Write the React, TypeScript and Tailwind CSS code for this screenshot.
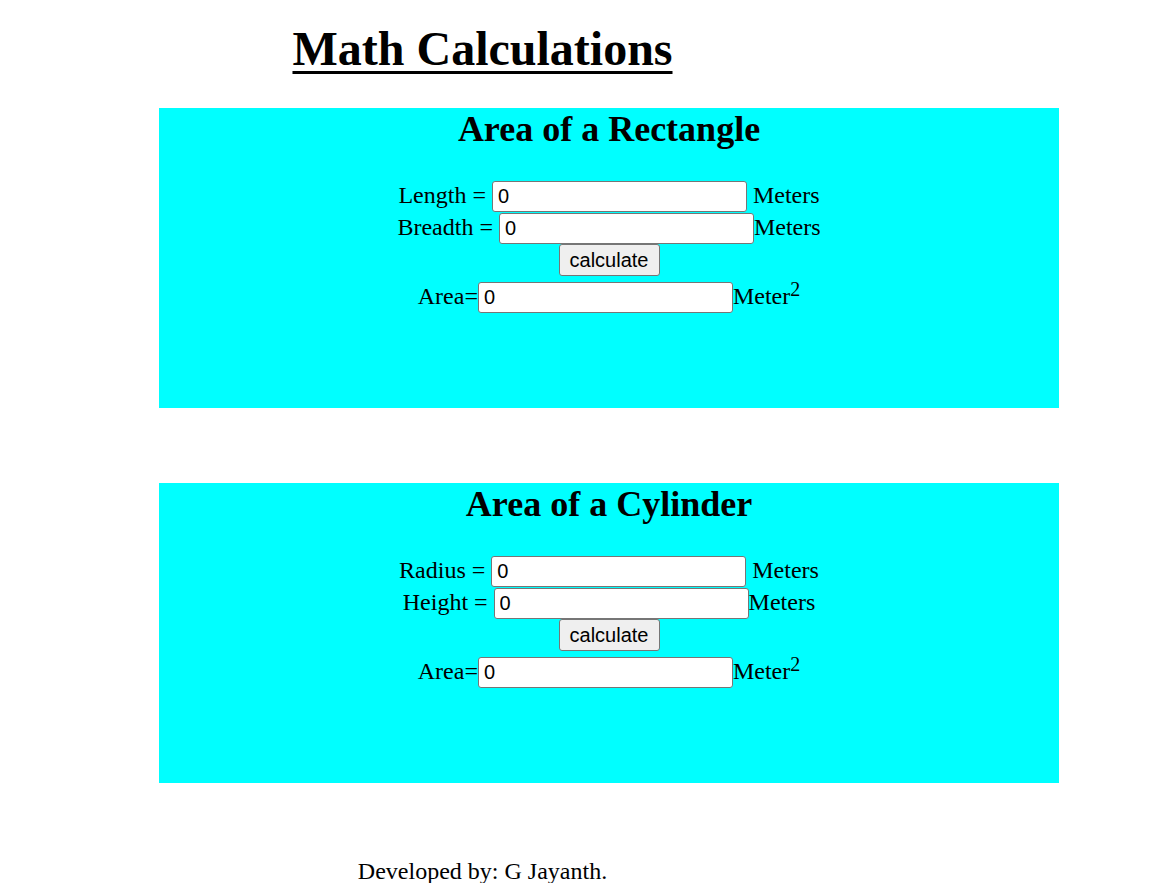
const serif = "font-['Liberation_Serif','Times_New_Roman',serif]";
const sans = "font-['Liberation_Sans',Arial,sans-serif]";

function NumberInput({ className = '' }: { className?: string }) {
  return (
    <input
      type="text"
      defaultValue="0"
      className={`h-[31px] w-[255px] rounded-[3px] border border-[#767676] bg-white pl-[5px] text-[20px] text-black outline-none ${sans} ${className}`}
    />
  );
}

function CalcButton() {
  return (
    <button
      className={`h-[32px] w-[101px] rounded-[3px] border border-[#767676] bg-[#efefef] text-[20px] leading-none text-black ${sans}`}
    >
      calculate
    </button>
  );
}

interface Field {
  label: string;
  gapAfter: boolean;
}

interface CardProps {
  title: string;
  fields: Field[];
}

function Card({ title, fields }: CardProps) {
  return (
    <div className="ml-[159px] h-[300px] w-[900px] bg-[#00ffff] text-center">
      <h2 className="pt-[1px] text-[36px] font-bold leading-[40px]">{title}</h2>
      <div className="mt-[31px] flex flex-col items-center text-[24px]">
        {fields.map((f) => (
          <div key={f.label} className="flex h-[32px] items-center">
            <span className="-translate-y-[1px]">{f.label} =</span>
            <NumberInput className="ml-[6px]" />
            <span className={`-translate-y-[1px] ${f.gapAfter ? 'ml-[6px]' : ''}`}>Meters</span>
          </div>
        ))}
        <div className="flex h-[32px] items-center">
          <CalcButton />
        </div>
        <div className="mt-[5px] flex h-[32px] items-center">
          <span className="-translate-y-[1px]">Area=</span>
          <NumberInput />
          <span className="-translate-y-[1px]">
            Meter
            <span className="relative -top-[8px] text-[20px] leading-none">2</span>
          </span>
        </div>
      </div>
    </div>
  );
}

export default function App() {
  return (
    <div className={`min-h-screen bg-white text-black ${serif}`}>
      <div className="w-[965px] pt-[22px] text-center">
        <h1 className="text-[48px] font-bold leading-[53px] underline decoration-[3px] underline-offset-[6px]">
          Math Calculations
        </h1>
      </div>
      <div className="mt-[33px]">
        <Card
          title="Area of a Rectangle"
          fields={[
            { label: 'Length', gapAfter: true },
            { label: 'Breadth', gapAfter: false },
          ]}
        />
      </div>
      <div className="mt-[75px]">
        <Card
          title="Area of a Cylinder"
          fields={[
            { label: 'Radius', gapAfter: true },
            { label: 'Height', gapAfter: false },
          ]}
        />
      </div>
      <p className="mt-[75px] w-[965px] text-center text-[24px] leading-[27px]">Developed by: G Jayanth.</p>
    </div>
  );
}
